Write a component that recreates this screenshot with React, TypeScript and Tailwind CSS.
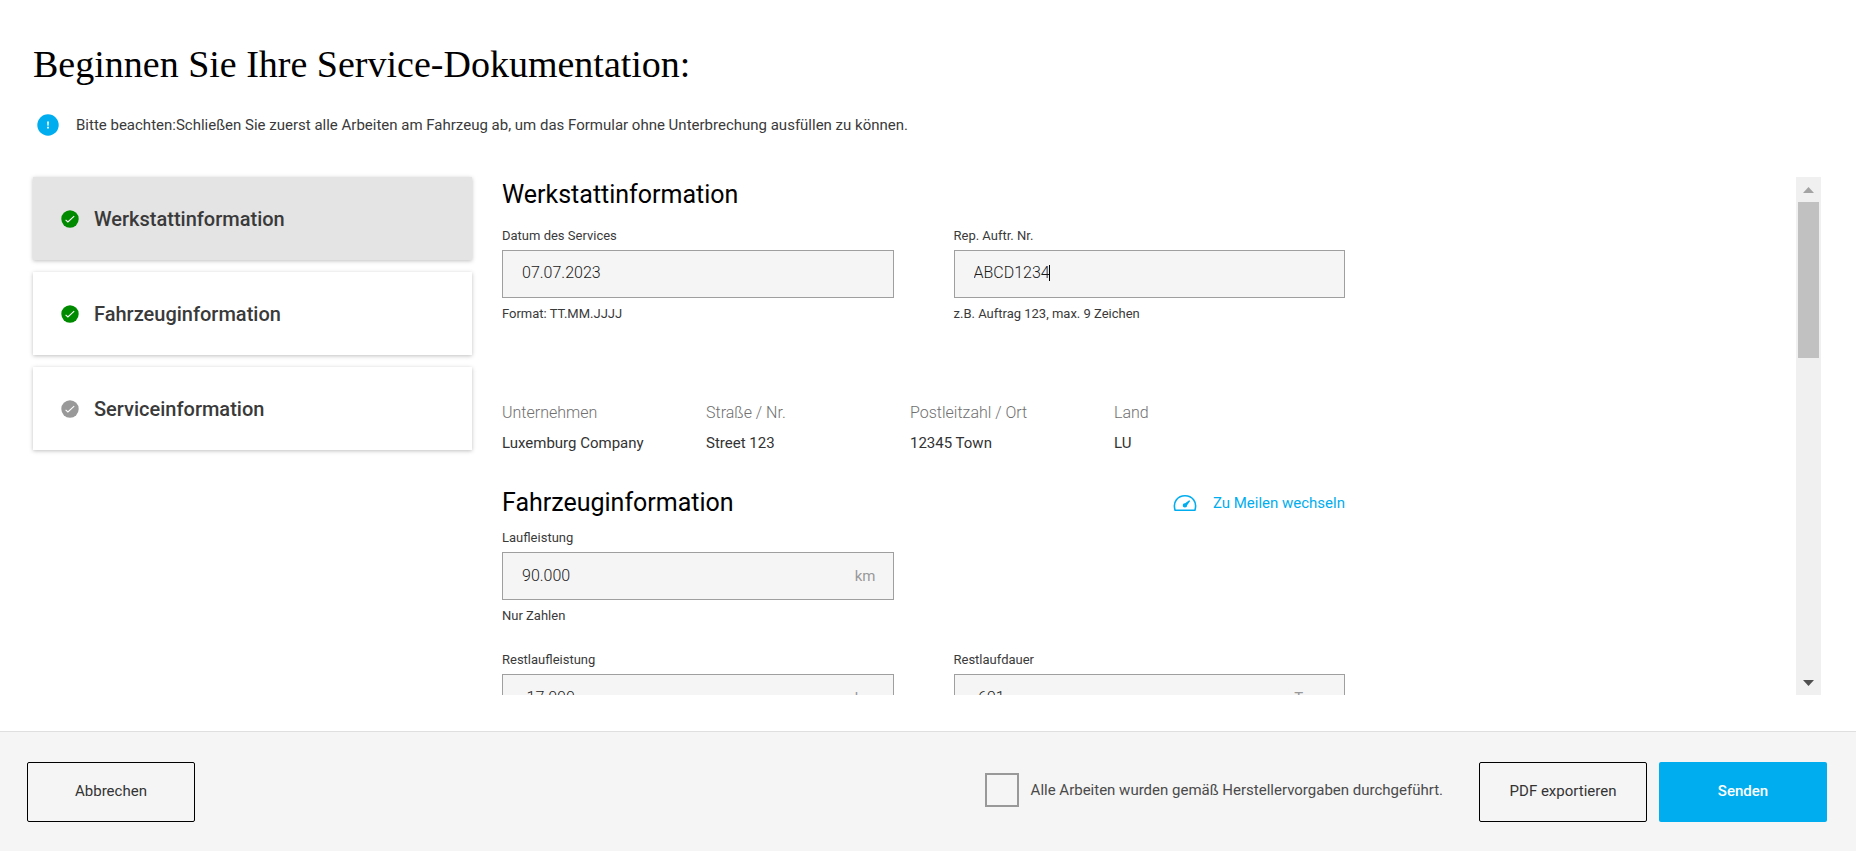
import { useRef } from "react";

type FieldProps = {
  id: string;
  label: string;
  value: string;
  hint?: string;
  unit?: string;
  caret?: boolean;
};

function Field({ id, label, value, hint, unit, caret }: FieldProps) {
  return (
    <div className="flex flex-col">
      <label htmlFor={id} className="mb-1 text-[13px] leading-5 text-[#3a3a3a]">
        {label}
      </label>
      <div className="relative flex h-12 items-center border border-[#9f9f9f] bg-[#f5f5f5] pr-[17px] pl-[19px]">
        <input
          id={id}
          type="text"
          defaultValue={value}
          className={
            unit
              ? "w-full min-w-0 flex-1 bg-transparent text-[16px] leading-6 font-light text-[#1a1a1a] outline-none"
              : "w-full min-w-0 flex-1 bg-transparent pb-[2px] text-[16px] leading-6 font-light text-[#1a1a1a] outline-none"
          }
        />
        {caret && <span className="absolute top-[14px] left-[94px] h-4 w-px bg-black" />}
        {unit && <span className="text-[15px] leading-6 text-[#999999]">{unit}</span>}
      </div>
      {hint && <p className="mt-[6px] text-[13px] leading-5 text-[#3a3a3a]">{hint}</p>}
    </div>
  );
}

function CheckBadge({ done }: { done: boolean }) {
  return (
    <svg viewBox="0 0 18 18" className="h-[18px] w-[18px] shrink-0" aria-hidden="true">
      <circle cx="9" cy="9" r="8.7" fill={done ? "#008a00" : "#999999"} />
      <path d="M4.600 9.800l2.300 2.200 6.300-5.800" fill="none" stroke="#fff" strokeWidth="1.1" />
    </svg>
  );
}

const steps = [
  { title: "Werkstattinformation", done: true, active: true },
  { title: "Fahrzeuginformation", done: true, active: false },
  { title: "Serviceinformation", done: false, active: false },
];

const workshop = [
  ["Unternehmen", "Luxemburg Company"],
  ["Straße / Nr.", "Street 123"],
  ["Postleitzahl / Ort", "12345 Town"],
  ["Land", "LU"],
];

export default function App() {
  const pane = useRef<HTMLDivElement>(null);
  const scroll = (by: number) => pane.current?.scrollBy({ top: by });

  return (
    <div className="flex h-screen flex-col bg-white font-[Roboto,'Liberation_Sans',sans-serif] text-black">
      <header className="px-[33px] pt-9">
        <h1 className="font-['Liberation_Serif',serif] text-[38px] leading-[56px] font-normal">
          Beginnen Sie Ihre Service-Dokumentation:
        </h1>
        <div className="mt-[21px] flex items-center gap-[17px] pl-1">
          <svg viewBox="0 0 22 22" className="h-[22px] w-[22px] shrink-0" aria-hidden="true">
            <circle cx="11" cy="11" r="10.7" fill="#00adef" />
            <path d="M10.100 7.500h1.800l-.3 4.200h-1.200z M10.100 12.700h1.800v1.800h-1.800z" fill="#fff" />
          </svg>
          <p className="text-[15px] leading-6 text-[#3a3a3a]">
            Bitte beachten:Schließen Sie zuerst alle Arbeiten am Fahrzeug ab, um das Formular ohne Unterbrechung
            ausfüllen zu können.
          </p>
        </div>
      </header>

      <main className="mt-10 mb-9 flex min-h-0 flex-1 gap-[30px] pr-[35px] pl-[33px]">
        <nav className="flex w-[439px] shrink-0 flex-col gap-3">
          {steps.map((s) => (
            <button
              key={s.title}
              type="button"
              className={
                s.active
                  ? "flex h-[83px] items-center gap-[15px] bg-[#e4e4e4] px-7 text-left shadow-[0_1px_4px_rgba(0,0,0,0.25)]"
                  : "flex h-[83px] items-center gap-[15px] bg-white px-7 text-left shadow-[0_1px_4px_rgba(0,0,0,0.25)]"
              }
            >
              <CheckBadge done={s.done} />
              <span className="text-[20px] leading-7 font-medium text-[#3a3a3a]">{s.title}</span>
            </button>
          ))}
        </nav>

        <div className="flex min-w-0 flex-1">
          <div ref={pane} className="min-w-0 flex-1 overflow-y-auto [scrollbar-width:none]">
            <form className="w-full max-w-[843px]">
              <h2 className="text-[25px] leading-9">Werkstattinformation</h2>
              <div className="mt-[13px] grid grid-cols-2 gap-x-[60px]">
                <Field id="datum" label="Datum des Services" value="07.07.2023" hint="Format: TT.MM.JJJJ" />
                <Field id="auftrag" label="Rep. Auftr. Nr." value="ABCD1234" hint="z.B. Auftrag 123, max. 9 Zeichen" caret />
              </div>

              <dl className="mt-[77px] grid grid-cols-[repeat(4,204px)]">
                {workshop.map(([k, v]) => (
                  <div key={k} className="flex flex-col gap-[6px] leading-6">
                    <dt className="text-[16px] font-light text-[#707070]">{k}</dt>
                    <dd className="text-[15px] text-[#333333]">{v}</dd>
                  </div>
                ))}
              </dl>

              <div className="mt-[30px] flex items-center justify-between">
                <h2 className="text-[25px] leading-9">Fahrzeuginformation</h2>
                <button type="button" className="flex items-center gap-4 text-[15px] leading-6 text-[#00adef]">
                  <svg viewBox="0 0 24 18" className="h-[18px] w-6" aria-hidden="true">
                    <path
                      d="M2.100 16.200C-.6 7.600 5 1.800 12 1.800s12.600 5.800 9.900 14.400z"
                      fill="none"
                      stroke="currentColor"
                      strokeWidth="1.6"
                      strokeLinejoin="round"
                    />
                    <path d="M16.200 6.200l1 .9-3.100 4.100a2.200 2.200 0 1 1-2-2z" fill="currentColor" />
                  </svg>
                  Zu Meilen wechseln
                </button>
              </div>
              <div className="mt-[7px] grid grid-cols-2 gap-x-[60px] gap-y-6">
                <div className="col-span-2 grid grid-cols-2 gap-x-[60px]">
                  <Field id="laufleistung" label="Laufleistung" value="90.000" hint="Nur Zahlen" unit="km" />
                </div>
                <Field id="restlaufleistung" label="Restlaufleistung" value="-17.000" unit="km" />
                <Field id="restlaufdauer" label="Restlaufdauer" value="-691" unit="Tage" />
              </div>
            </form>
          </div>

          <div className="flex w-[25px] shrink-0 flex-col bg-[#f0f0f0]">
            <button type="button" aria-label="Nach oben" onClick={() => scroll(-40)} className="flex h-[25px] items-center justify-center">
              <svg viewBox="0 0 11 6" className="h-[6px] w-[11px]" aria-hidden="true">
                <path d="M0 6L5.500 0 11 6z" fill="#a3a3a3" />
              </svg>
            </button>
            <div className="flex flex-1 flex-col px-[2px]">
              <div className="h-1/3 bg-[#c1c1c1]" />
            </div>
            <button type="button" aria-label="Nach unten" onClick={() => scroll(40)} className="flex h-[25px] items-center justify-center">
              <svg viewBox="0 0 11 6" className="h-[6px] w-[11px]" aria-hidden="true">
                <path d="M0 0L5.500 6 11 0z" fill="#505050" />
              </svg>
            </button>
          </div>
        </div>
      </main>

      <footer className="flex h-[120px] shrink-0 items-center border-t border-[#dfdfdf] bg-[#f5f5f5] pr-[29px] pl-[27px]">
        <button type="button" className="h-[60px] w-[168px] rounded-[2px] border border-black text-[15px] text-[#333333]">
          Abbrechen
        </button>
        <label className="ml-auto flex items-center gap-3 pb-1 text-[15px] leading-6 text-[#4a4a4a]">
          <input type="checkbox" className="h-[34px] w-[34px] shrink-0 appearance-none border-2 border-[#999999] checked:bg-[#00adef]" />
          Alle Arbeiten wurden gemäß Herstellervorgaben durchgeführt.
        </label>
        <button type="button" className="ml-9 h-[60px] w-[168px] rounded-[2px] border border-black text-[15px] text-[#333333]">
          PDF exportieren
        </button>
        <button type="submit" className="ml-3 h-[60px] w-[168px] rounded-[2px] bg-[#00adef] text-[15px] font-medium text-white">
          Senden
        </button>
      </footer>
    </div>
  );
}
